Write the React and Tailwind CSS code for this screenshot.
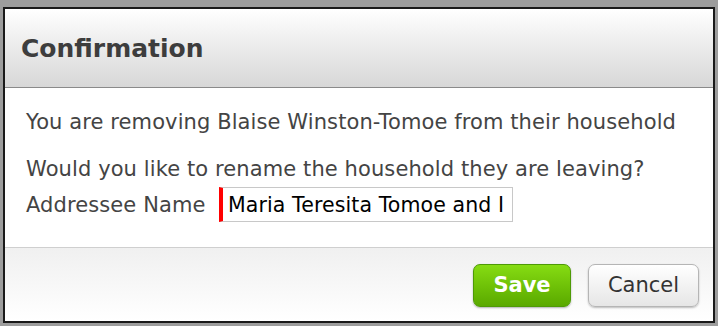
export default function App() {
  return (
    <div className="w-[718px] h-[326px] bg-[#9d9d9d] pt-[7px] pl-[3px] overflow-hidden" style={{ fontFamily: '"DejaVu Sans", Verdana, sans-serif' }}>
      <div className="w-[712px] h-[316px] bg-white border-2 border-[#1a1a1a] flex flex-col">
        {/* header */}
        <div className="h-[79px] shrink-0 bg-gradient-to-b from-white to-[#d7d7d7] border-b border-[#8a8a8a] flex items-center pl-[16px] pt-[1px]">
          <h2 className="text-[25px] font-bold text-[#3d3d3d]">Confirmation</h2>
        </div>

        {/* body */}
        <div className="flex-1 pl-[21px] pt-[21px] text-[21px] tracking-[0.1px] text-[#444]">
          <p className="leading-[26px]">You are removing Blaise Winston-Tomoe from their household</p>
          <p className="leading-[26px] mt-[21px]">Would you like to rename the household they are leaving?</p>
          <div className="flex items-center mt-[5px]">
            <label className="w-[193px] shrink-0 leading-[26px]">Addressee Name</label>
            <input
              type="text"
              defaultValue="Maria Teresita Tomoe and I"
              className="w-[294px] h-[35px] border border-[#c8c8c8] border-l-4 border-l-[#ff0000] pl-[5px] text-[20.5px] text-black outline-none"
            />
          </div>
        </div>

        {/* footer */}
        <div className="h-[74px] shrink-0 border-t border-[#cfcfcf] bg-gradient-to-b from-[#f0f0f0] to-white flex items-center justify-end gap-[17px] pr-[14px] pt-[2px]">
          <button className="w-[98px] h-[43px] rounded-[7px] border border-[#4e9a06] bg-gradient-to-b from-[#86dc12] to-[#5aa900] text-white font-bold text-[21px] shadow-[0_1px_2px_rgba(0,0,0,0.3)]">
            Save
          </button>
          <button className="w-[111px] h-[43px] rounded-[7px] border border-[#b5b5b5] bg-gradient-to-b from-white to-[#e6e6e6] text-[#333] text-[21px] shadow-[0_1px_2px_rgba(0,0,0,0.25)]">
            Cancel
          </button>
        </div>
      </div>
    </div>
  );
}
